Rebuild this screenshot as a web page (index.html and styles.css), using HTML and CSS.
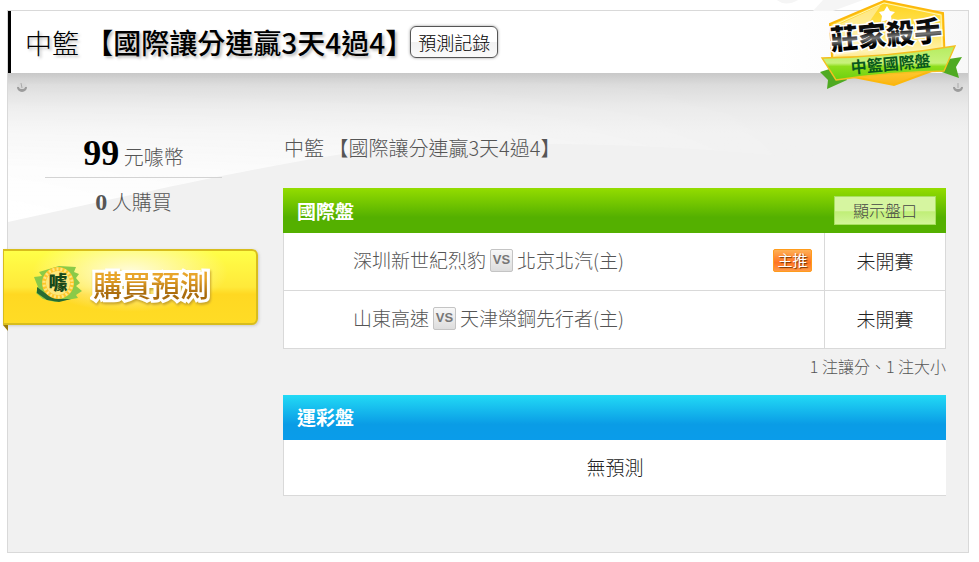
FILE: index.html
```html
<!DOCTYPE html>
<html lang="zh-Hant">
<head>
<meta charset="utf-8">
<title>莊家殺手</title>
<link rel="stylesheet" href="styles.css">
</head>
<body>
<main class="panel">
  <svg class="top-shine" viewBox="0 0 180 11" aria-hidden="true">
    <path d="M9 0Q18 7 30 0Z M55 0H95L65 11H45Z" fill="#f5f5f5"/>
  </svg>
  <header class="panel-header">
    <h1 class="title"><span class="league">中籃</span> 【國際讓分連贏3天4過4】</h1>
    <button class="record" type="button">預測記錄</button>
    <svg class="badge" viewBox="0 0 148 92" role="img" aria-label="莊家殺手 中籃國際盤">
      <defs>
        <linearGradient id="gold" x1="0" y1="0" x2="0" y2="1">
          <stop offset="0" stop-color="#ffd21c"/><stop offset=".35" stop-color="#ffe45a"/><stop offset=".6" stop-color="#fff3b0"/><stop offset=".85" stop-color="#ffc62c"/><stop offset="1" stop-color="#f9b418"/>
        </linearGradient>
        <linearGradient id="ribbon" x1="0" y1="0" x2="0" y2="1">
          <stop offset="0" stop-color="#b5ec60"/><stop offset=".5" stop-color="#c8f27c"/><stop offset=".6" stop-color="#8ede1c"/><stop offset="1" stop-color="#6cd010"/>
        </linearGradient>
        <linearGradient id="ink" x1="0" y1="0" x2="0" y2="1">
          <stop offset="0" stop-color="#000"/><stop offset=".45" stop-color="#111"/><stop offset=".6" stop-color="#777"/><stop offset=".75" stop-color="#000"/>
        </linearGradient>
      </defs>
      <path d="M1 72L20 66L28 80L8 89L9 80Z" fill="#4faa22"/>
      <path d="M123 60L143 57L137 67L140 78L117 70Z" fill="#4faa22"/>
      <path d="M11 24L65 1L124 13L126 66L75 85L14 73Z" fill="url(#gold)" stroke="#fcb80c" stroke-width="2"/>
      <path d="M13 26L65 3L122 15L123 48L16 59Z" fill="none" stroke="#fff6b8" stroke-width="1"/>
      <path d="M15 27L62 5L46 28L38 52L15 56Z" fill="#fff" opacity=".4"/>
      <path d="M68 6l3 5 5 1-4 4 1 6-5-2-6 2 1-6-3-4 5-1z" fill="#fff"/>
      <path d="M3 58Q70 57 136 46L125 71Q70 72 17 80Z" fill="url(#ribbon)" stroke="#f4c020" stroke-width="1.4"/>
      <g transform="rotate(-5 70 45)">
        <text class="badge-name" x="12" y="45" fill="url(#ink)">莊家殺手</text>
        <text class="badge-league" x="30" y="70">中籃國際盤</text>
      </g>
    </svg>
  </header>

  <div class="panel-body">
    <svg class="swoosh" viewBox="0 0 960 160" preserveAspectRatio="none" aria-hidden="true">
      <defs>
        <linearGradient id="haze" x1="0" y1="0" x2="0" y2="1">
          <stop offset="0" stop-color="#fff" stop-opacity="0"/><stop offset=".2" stop-color="#fff" stop-opacity=".15"/><stop offset=".65" stop-color="#fff" stop-opacity=".85"/><stop offset="1" stop-color="#fff"/>
        </linearGradient>
        <linearGradient id="fade">
          <stop offset="0" stop-color="#fff"/><stop offset=".45" stop-color="#bbb"/><stop offset=".85" stop-color="#000"/>
        </linearGradient>
        <mask id="fade-right"><path d="M0 0H960V160H0Z" fill="url(#fade)"/></mask>
      </defs>
      <path d="M0 0H740Q800 40 808 88Q700 73 550 71Q430 70 369 76C280 88 190 108 118 123Q50 138 0 149Z" fill="url(#haze)" mask="url(#fade-right)"/>
    </svg>
    <svg class="pin pin-left" viewBox="0 0 12 12" aria-hidden="true"><circle cx="6" cy="6" r="5" fill="#d8d8d8"/><path d="M1 6A5 5 0 0 0 11 6L9 6A3 2 0 0 1 3 6Z" fill="#9c9c9c"/><path d="M5 2l1 5" stroke="#aaa" stroke-width="1"/></svg>
    <svg class="pin pin-right" viewBox="0 0 12 12" aria-hidden="true"><circle cx="6" cy="6" r="5" fill="#d8d8d8"/><path d="M1 6A5 5 0 0 0 11 6L9 6A3 2 0 0 1 3 6Z" fill="#9c9c9c"/><path d="M6 2v5" stroke="#aaa" stroke-width="1"/></svg>

    <aside class="side">
      <p class="price"><strong>99</strong> 元噱幣</p>
      <p class="buyers"><strong>0</strong> 人購買</p>
      <button class="buy" type="button">
        <svg class="coin" viewBox="0 0 50 38" aria-hidden="true">
          <path d="M6 7L26 1L43 2L41 7L46 9L43 13L47 18L43 21L49 26L43 30L45 33L22 37L10 34L3 28L5 22L1 12L9 11Z" fill="#8aca48"/>
          <path d="M4 22L4 28L14 35L26 37L38 34L25 34L12 28Z" fill="#276c32"/>
          <circle cx="25" cy="18" r="16" fill="#ffc629"/>
          <circle cx="25" cy="18" r="14" fill="none" stroke="#ffe680" stroke-width="3" stroke-dasharray="2 2"/>
          <circle cx="25" cy="18" r="12" fill="#fce77b"/>
          <text class="coin-char" x="25" y="25">噱</text>
        </svg>
        <span class="buy-label" data-text="購買預測">購買預測</span>
      </button>
    </aside>

    <section class="content">
      <p class="subtitle">中籃 【國際讓分連贏3天4過4】</p>

      <div class="bar bar-green">
        <h2>國際盤</h2>
        <button class="odds" type="button">顯示盤口</button>
      </div>
      <table class="games">
        <tr>
          <td class="match"><div class="match-row"><span>深圳新世紀烈豹</span><span class="vs">VS</span><span>北京北汽(主)</span><span class="pick">主推</span></div></td>
          <td class="status">未開賽</td>
        </tr>
        <tr>
          <td class="match"><div class="match-row"><span>山東高速</span><span class="vs">VS</span><span>天津榮鋼先行者(主)</span></div></td>
          <td class="status">未開賽</td>
        </tr>
      </table>
      <p class="note">1 注讓分、1 注大小</p>

      <div class="bar bar-blue"><h2>運彩盤</h2></div>
      <p class="empty">無預測</p>
    </section>
  </div>
</main>
</body>
</html>
```
FILE: styles.css
```css
* { box-sizing: border-box; }

body {
  margin: 0;
  padding: 10px 10px 9px 7px;
  background: #fff;
  color: #555;
  font-family: "Noto Sans CJK TC", sans-serif;
  font-weight: 300;
  font-size: 19px;
}

h1, h2, p { margin: 0; }
button { font-family: inherit; font-weight: inherit; cursor: pointer; }

.panel {
  position: relative;
  border: 1px solid #d9d9d9;
  background: #f1f1f1;
}

.top-shine { position: absolute; right: 20px; top: -11px; width: 180px; height: 11px; }

.panel-header {
  position: relative;
  z-index: 1;
  display: flex;
  align-items: center;
  height: 62px;
  padding-left: 14px;
  border-left: 3px solid #000;
  background: linear-gradient(90deg, #fff 80%, #f8f8f8);
}

.title {
  margin-right: -3px;
  color: #000;
  font-size: 28px;
  font-weight: 500;
  line-height: 40px;
  white-space: nowrap;
  text-shadow: 2px 2px 3px #bbb;
}
.league { font-size: 27px; font-weight: 300; }

.record {
  height: 32px;
  padding: 0 7px;
  border: 1px solid #555;
  border-radius: 6px;
  background: linear-gradient(#fff 50%, #f1f1f1 50%, #fafafa);
  box-shadow: 0 0 3px #999;
  color: #000;
  font-size: 18px;
  line-height: 28px;
}

.badge { position: absolute; right: 1px; top: -11px; width: 148px; height: 92px; }
.badge-name { font-size: 28px; font-weight: 900; stroke: #fff; stroke-width: 3px; paint-order: stroke; }
.badge-league { font-size: 16px; font-weight: 700; fill: #08591d; }

.panel-body {
  position: relative;
  display: flex;
  padding: 60px 22px 56px 0;
  background: linear-gradient(#c8c8c8, #dcdcdc 12px, #eaeaea 34px, #f1f1f1 60px);
}
.swoosh { position: absolute; left: 0; top: 0; width: 100%; height: 160px; }
.pin { position: absolute; top: 8px; width: 12px; height: 12px; }
.pin-left { left: 8px; }
.pin-right { right: 4px; }

.side {
  position: relative;
  flex: 0 0 275px;
  display: flex;
  flex-direction: column;
}
.price, .buyers { width: 177px; margin-left: 37px; text-align: center; font-size: 20px; }
.price { height: 45px; line-height: 40px; border-bottom: 1px solid #d3d3d3; }
.price strong { color: #000; font: bold 36px/40px "Liberation Serif", serif; }
.buyers { line-height: 48px; }
.buyers strong { font: bold 24px/48px "Liberation Serif", serif; }

.buy {
  position: relative;
  display: flex;
  align-items: center;
  gap: 10px;
  width: 255px;
  height: 76px;
  margin: 23px 0 0 -5px;
  padding: 0 0 6px 29px;
  border: 2px solid #d8bd1d;
  border-left-width: 1px;
  border-radius: 0 6px 6px 0;
  background:
    radial-gradient(ellipse at 50% 30%, #fffce0, #fff68000 55%),
    linear-gradient(#ffff48, #ffe93a 50%, #ffd822 60%, #ffdc25);
  box-shadow: 1px 1px 3px #ccc;
}
.buy::after {
  content: "";
  position: absolute;
  left: -1px;
  top: 74px;
  border-top: 6px solid #9c7a0a;
  border-left: 5px solid transparent;
}
.coin { width: 50px; height: 38px; }
.coin-char { font-size: 19px; font-weight: 900; fill: #174719; text-anchor: middle; }
.buy-label {
  position: relative;
  font-size: 29px;
  font-weight: 500;
  line-height: 40px;
  color: #fff;
  -webkit-text-stroke: 6px #fff;
  filter: drop-shadow(1px 2px 1px #c9a52c);
}
.buy-label::after {
  content: attr(data-text);
  position: absolute;
  left: 0;
  top: 0;
  -webkit-text-stroke: 0;
  background: linear-gradient(#e8a52b 35%, #a86a0c 75%);
  -webkit-background-clip: text;
  color: transparent;
}

.content { position: relative; flex: 1; min-width: 0; }
.subtitle { height: 55px; padding-left: 1px; font-size: 20px; line-height: 30px; }

.bar {
  display: flex;
  align-items: center;
  justify-content: space-between;
  height: 45px;
  padding: 0 10px 0 14px;
}
.bar h2 { color: #fff; font-size: 19px; font-weight: 700; line-height: 28px; }
.bar-green { background: linear-gradient(#94dc00, #54b000 65%); }
.bar-blue { background: linear-gradient(#22daf5, #0a9ce6 65%, #0a9cea); }

.odds {
  width: 102px;
  height: 29px;
  padding: 0 0 2px;
  border: 1px solid #a9e060;
  background: linear-gradient(#d6f5a0 50%, #c0ee78 55%, #d2f598);
  color: #444;
  font-size: 16px;
  line-height: 24px;
}

.games { width: 100%; border-collapse: collapse; background: #fff; }
.games td { height: 58px; padding: 0 0 2px; border: 1px solid #d9d9d9; border-top: 0; }
.games tr:first-child td { height: 57px; }
.match-row { display: flex; align-items: center; gap: 4px; padding: 0 12px 0 69px; line-height: 28px; }
.vs {
  width: 23px;
  height: 23px;
  border: 1px solid #c4c4c4;
  border-radius: 2px;
  background: linear-gradient(#f8f8f8, #ddd);
  color: #777;
  font: bold 13px/20px "Liberation Sans", sans-serif;
  text-align: center;
}
.pick {
  width: 39px;
  height: 23px;
  margin-left: auto;
  border: 1px solid #ff9c1c;
  border-radius: 2px;
  background: linear-gradient(#ffb055, #ff7422 60%, #ff9a45);
  color: #fff;
  font-size: 15px;
  font-weight: 400;
  line-height: 20px;
  text-align: center;
  text-shadow: 1px 1px 1px #743000;
}
.games .status { width: 121px; color: #222; text-align: center; }

.note { height: 46px; font-size: 16px; line-height: 34px; text-align: right; }
.empty {
  padding-bottom: 2px;
  border: 1px solid #d9d9d9;
  border-width: 0 0 1px 1px;
  background: #fff;
  color: #222;
  line-height: 53px;
  text-align: center;
}
```
